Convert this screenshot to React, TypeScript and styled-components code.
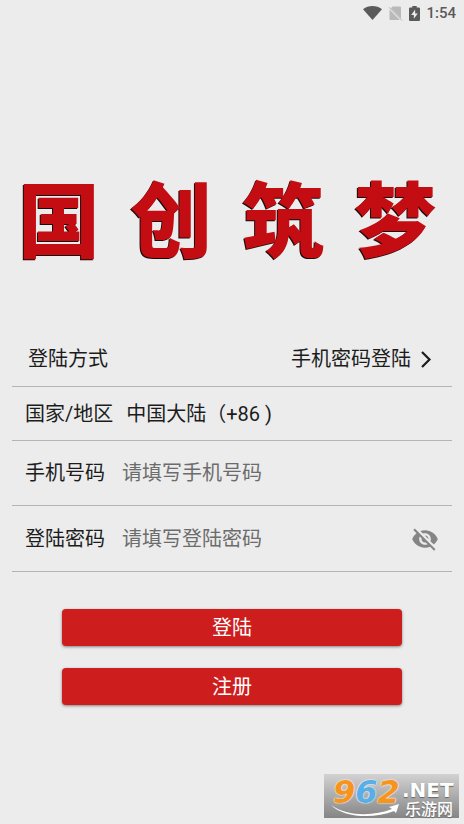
import React, { useState } from "react";
import styled, { createGlobalStyle } from "styled-components";
import { MdVisibility, MdVisibilityOff } from "react-icons/md";

const GlobalStyle = createGlobalStyle`
  *, *::before, *::after { box-sizing: border-box; }
  body {
    margin: 0;
    background: #ececec;
    color: #1c1c1c;
    font-family: Roboto, "Noto Sans CJK SC", sans-serif;
    font-size: 20px;
    line-height: 28px;
  }
  button, input { font: inherit; color: inherit; }
`;

const Page = styled.div`
  position: relative;
  min-height: 100vh;
  display: flex;
  flex-direction: column;
`;

const StatusBar = styled.header`
  display: flex;
  justify-content: flex-end;
  align-items: center;
  height: 26px;
  padding: 0 8px;
  gap: 6px;
  color: #5a5a5a;
`;

const Clock = styled.time`
  font-size: 15px;
  line-height: 20px;
  font-weight: 500;
`;

const Logo = styled.h1`
  display: flex;
  justify-content: space-between;
  margin: 152px 28px 0 18px;
  color: #c40d13;
  font-family: "Noto Sans CJK SC", sans-serif;
  font-size: 82px;
  line-height: 76px;
  font-weight: 900;
  text-shadow: -1px 1px 0 #1a0a0a;
`;

const Form = styled.form`
  display: flex;
  flex-direction: column;
  margin: 76px 12px 0;
`;

const Row = styled.div<{ $height: number; $indent?: number }>`
  display: flex;
  align-items: center;
  min-height: ${(p) => p.$height}px;
  padding: 0 13px 0 ${(p) => p.$indent ?? 13}px;
  border-bottom: 1px solid #b4b4b4;
`;

const MethodRow = styled(Row)`
  padding-top: 2px;
`;

const Label = styled.label`
  flex: none;
  width: 97px;
`;

const RegionLabel = styled.span`
  flex: none;
  margin-right: 13px;
`;

const Region = styled.span`
  white-space: pre;
`;

const MethodButton = styled.button`
  display: flex;
  align-items: center;
  gap: 9px;
  margin-left: auto;
  padding: 0 7px 0 0;
  border: 0;
  background: none;
`;

const Field = styled.input`
  flex: 1;
  min-width: 0;
  padding: 0;
  border: 0;
  outline: 0;
  background: none;
  &::placeholder { color: #6c6c6c; opacity: 1; }
`;

const EyeButton = styled.button`
  display: flex;
  padding: 0;
  border: 0;
  background: none;
  color: #858585;
`;

const Actions = styled.div`
  display: flex;
  flex-direction: column;
  gap: 22px;
  padding: 37px 50px 0;
`;

const ActionButton = styled.button`
  height: 37px;
  padding: 0;
  border: 0;
  border-radius: 4px;
  background: #cd1d1d;
  color: #fff;
  box-shadow: 0 1px 3px rgba(0, 0, 0, 0.45);
`;

const Watermark = styled.aside`
  position: absolute;
  right: 5px;
  bottom: 6px;
  display: grid;
  grid-template-columns: 78px 1fr;
  height: 44px;
  width: 135px;
  background: linear-gradient(#d2d2d2, #858585);
  color: #fff;
`;

const Digits = styled.div`
  padding-left: 9px;
  font-family: "DejaVu Sans", sans-serif;
  font-size: 32px;
  line-height: 36px;
  font-weight: 700;
  font-style: italic;
  color: #f7941d;
  text-shadow: 0 0 2px #fff, 0 0 1px #fff;
`;

const Blue = styled.span`
  color: #58aee6;
`;

const Swoosh = styled.svg`
  position: absolute;
  left: 6px;
  top: 29px;
`;

const SiteText = styled.div`
  display: flex;
  flex-direction: column;
  padding-top: 6px;
  text-shadow: 0 1px 1px #666;
  font-weight: 700;
`;

const Net = styled.span`
  font-family: "DejaVu Sans", sans-serif;
  font-size: 20px;
  line-height: 20px;
`;

const SiteName = styled.span`
  padding-left: 3px;
  font-family: "Noto Sans CJK SC", sans-serif;
  font-size: 16px;
  line-height: 16px;
  font-weight: 500;
`;

function WifiIcon() {
  return (
    <svg width="19" height="14" viewBox="0 0 19 14" fill="currentColor" aria-hidden="true">
      <path d="M0 3.2C5.5-1 13.5-1 19 3.2L9.5 14Z" />
    </svg>
  );
}

function NoSimIcon() {
  return (
    <svg width="15" height="15" viewBox="0 0 15 15" aria-hidden="true">
      <path d="M4.6 0.5H12q1 0 1 1v11L3 2.200ZM1.500 3.400 11.800 14H2.500q-1 0-1-1Z" fill="#b9b9b9" />
      <path d="m1 1.200 13 13.300" stroke="#b0b0b0" />
    </svg>
  );
}

function BatteryIcon() {
  return (
    <svg width="11" height="15" viewBox="0 0 10 15" preserveAspectRatio="none" aria-hidden="true">
      <path d="M3 0h4v1.5h2q1 0 1 1V14q0 1-1 1H1q-1 0-1-1V2.500q0-1 1-1h2Z" fill="currentColor" />
      <path d="M5.600 3.500 2 9h2.400v3.800L8 7.400H5.600Z" fill="#ececec" />
    </svg>
  );
}

function ChevronIcon() {
  return (
    <svg width="12" height="18" viewBox="0 0 12 18" fill="none" aria-hidden="true">
      <path d="m2 2 7.500 7.500L2 17" stroke="#1c1c1c" strokeWidth="2.200" />
    </svg>
  );
}

export default function App() {
  const [visible, setVisible] = useState(false);
  return (
    <Page>
      <GlobalStyle />
      <StatusBar>
        <WifiIcon />
        <NoSimIcon />
        <BatteryIcon />
        <Clock>1:54</Clock>
      </StatusBar>
      <Logo>
        {["国", "创", "筑", "梦"].map((c) => (
          <span key={c}>{c}</span>
        ))}
      </Logo>
      <Form onSubmit={(e) => e.preventDefault()}>
        <MethodRow $height={57} $indent={16}>
          <span id="method">登陆方式</span>
          <MethodButton type="button" aria-describedby="method">
            手机密码登陆
            <ChevronIcon />
          </MethodButton>
        </MethodRow>
        <Row $height={54}>
          <RegionLabel>国家/地区</RegionLabel>
          <Region>中国大陆（+86 )</Region>
        </Row>
        <Row $height={65}>
          <Label htmlFor="phone">手机号码</Label>
          <Field id="phone" type="tel" placeholder="请填写手机号码" />
        </Row>
        <Row $height={66}>
          <Label htmlFor="password">登陆密码</Label>
          <Field id="password" type={visible ? "text" : "password"} placeholder="请填写登陆密码" />
          <EyeButton type="button" aria-label="显示密码" onClick={() => setVisible(!visible)}>
            {visible ? <MdVisibility size={28} /> : <MdVisibilityOff size={28} />}
          </EyeButton>
        </Row>
        <Actions>
          <ActionButton type="submit">登陆</ActionButton>
          <ActionButton type="button">注册</ActionButton>
        </Actions>
      </Form>
      <Watermark>
        <Digits>
          9<Blue>6</Blue>2
        </Digits>
        <SiteText>
          <Net>.NET</Net>
          <SiteName>乐游网</SiteName>
        </SiteText>
        <Swoosh width="70" height="14" viewBox="0 0 70 14" aria-hidden="true">
          <path d="M1 2C18 14 44 13 62 6l-3-2 10-3-3 9-2-2C44 16 14 15 1 2Z" fill="#fff" />
        </Swoosh>
      </Watermark>
    </Page>
  );
}
